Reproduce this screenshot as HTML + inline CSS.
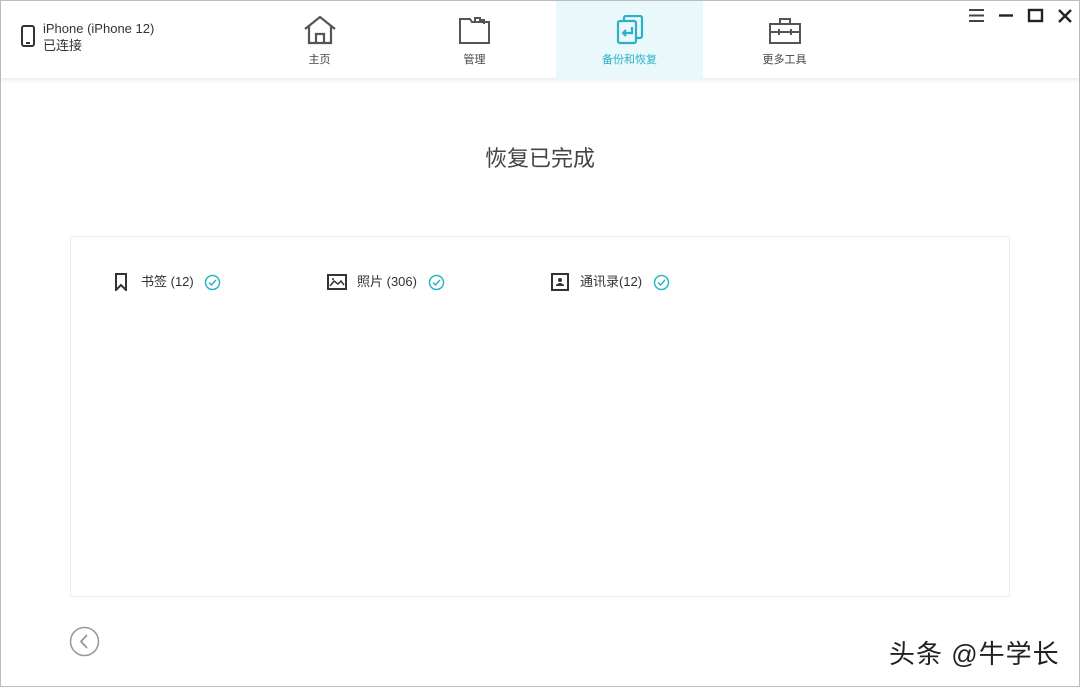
<!DOCTYPE html>
<html><head><meta charset="utf-8"><style>
*{margin:0;padding:0;box-sizing:border-box}
body{width:1080px;height:687px;background:#fff;font-family:"Liberation Sans","Noto Sans CJK SC",sans-serif;position:relative;overflow:hidden;color:#333}
.frame{position:absolute;inset:0;border:1px solid #bdbdbd}
.hdr{position:absolute;left:1px;top:1px;width:1078px;height:78px;background:#fff;box-shadow:0 2px 3px rgba(0,0,0,0.06);border-bottom:1px solid #eee}
.tab{position:absolute;top:0;width:147px;height:78px;text-align:center;font-size:11px;color:#444}
.tab svg{position:absolute;left:57px;top:14px}
.tab span{position:absolute;left:0;right:0;top:50px}
.abs{position:absolute}
</style></head><body>
<div class="frame"></div>
<div class="hdr">
 <svg class="abs" style="left:20px;top:24px" width="14" height="22" viewBox="0 0 14 22"><rect x="1" y="1" width="12" height="20" rx="2" fill="none" stroke="#333" stroke-width="2"/><rect x="5" y="17" width="4" height="2" fill="#333"/></svg>
 <div class="abs" style="left:42px;top:19px;font-size:13px;color:#333;line-height:17px">iPhone (iPhone 12)<br>已连接</div>
 <div class="tab" style="left:245px"><svg width="34" height="30" viewBox="0 0 34 30"><path d="M2 14 L17 2 L32 14 M6 11 V28 H28 V11 M13 28 V19 H21 V28" fill="none" stroke="#555" stroke-width="2.2"/></svg><span>主页</span></div>
 <div class="tab" style="left:400px"><svg width="34" height="30" viewBox="0 0 34 30"><path d="M2 4 H12 L14 7 H31 V28 H2 Z M17 7 V3 H22 V7 M22 7 V5 H26 V9" fill="none" stroke="#555" stroke-width="2"/></svg><span>管理</span></div>
 <div class="tab" style="left:555px;background:#e9f8fb;color:#2bb0c6"><svg width="34" height="30" viewBox="0 0 34 30"><rect x="11" y="1" width="18" height="22" rx="2" fill="none" stroke="#2bb0c6" stroke-width="2.2"/><rect x="5" y="6" width="18" height="22" rx="2" fill="#e9f8fb" stroke="#2bb0c6" stroke-width="2.2"/><path d="M19 12 V18 H10 M13 15 L10 18 L13 21" fill="none" stroke="#2bb0c6" stroke-width="2.2"/></svg><span>备份和恢复</span></div>
 <div class="tab" style="left:710px"><svg width="34" height="30" viewBox="0 0 34 30"><path d="M2 9 H32 V28 H2 Z M12 9 V4 H22 V9 M2 17 H32 M11 14 V20 M23 14 V20" fill="none" stroke="#555" stroke-width="2"/></svg><span>更多工具</span></div>
 <svg class="abs" style="left:966px;top:7px" width="110" height="16" viewBox="0 0 110 16"><path d="M2 2 H17 M2 7.5 H17 M2 13 H17" stroke="#444" stroke-width="2"/><path d="M32 7.5 H46" stroke="#222" stroke-width="2.4"/><rect x="62" y="2" width="13" height="11" fill="none" stroke="#222" stroke-width="2.4"/><path d="M92 2 L104 14 M104 2 L92 14" stroke="#222" stroke-width="2.4"/></svg>
</div>
<div class="abs" style="left:0;width:1080px;top:141px;text-align:center;font-size:22px;color:#444">恢复已完成</div>
<div class="abs" style="left:70px;top:236px;width:940px;height:361px;border:1px solid #ececec"></div>
<svg class="abs" style="left:114px;top:273px" width="14" height="18" viewBox="0 0 14 18"><path d="M2 1 H12 V17 L7 12 L2 17 Z" fill="none" stroke="#333" stroke-width="2"/></svg>
<div class="abs" style="left:141px;top:271px;font-size:13px;color:#333">书签 (12)</div>
<svg class="abs" style="left:204px;top:274px" width="17" height="17"><circle cx="8.5" cy="8.5" r="7" fill="none" stroke="#2bb7c4" stroke-width="1.5"/><path d="M5 8.5 L7.5 11 L12 6" fill="none" stroke="#2bb7c4" stroke-width="1.5"/></svg>
<svg class="abs" style="left:327px;top:274px" width="20" height="16" viewBox="0 0 20 16"><rect x="1" y="1" width="18" height="14" fill="none" stroke="#333" stroke-width="2"/><path d="M3 12 L7 7 L11 10 L14 7 L17 11" fill="none" stroke="#333" stroke-width="1.5"/><circle cx="6" cy="5" r="1" fill="#333"/></svg>
<div class="abs" style="left:357px;top:271px;font-size:13px;color:#333">照片 (306)</div>
<svg class="abs" style="left:428px;top:274px" width="17" height="17"><circle cx="8.5" cy="8.5" r="7" fill="none" stroke="#2bb7c4" stroke-width="1.5"/><path d="M5 8.5 L7.5 11 L12 6" fill="none" stroke="#2bb7c4" stroke-width="1.5"/></svg>
<svg class="abs" style="left:551px;top:273px" width="18" height="18" viewBox="0 0 18 18"><rect x="1" y="1" width="16" height="16" fill="none" stroke="#333" stroke-width="2"/><circle cx="9" cy="7" r="2" fill="#333"/><path d="M5 13 H13 V12 Q9 8 5 12 Z" fill="#333"/></svg>
<div class="abs" style="left:580px;top:271px;font-size:13px;color:#333">通讯录(12)</div>
<svg class="abs" style="left:653px;top:274px" width="17" height="17"><circle cx="8.5" cy="8.5" r="7" fill="none" stroke="#2bb7c4" stroke-width="1.5"/><path d="M5 8.5 L7.5 11 L12 6" fill="none" stroke="#2bb7c4" stroke-width="1.5"/></svg>
<svg class="abs" style="left:69px;top:626px" width="31" height="31"><circle cx="15.5" cy="15.5" r="14" fill="none" stroke="#999" stroke-width="1.6"/><path d="M18 9 L12 15.5 L18 22" fill="none" stroke="#999" stroke-width="1.8"/></svg>
<div class="abs" style="left:889px;top:634px;font-size:26px;color:#222;letter-spacing:1px">头条 @牛学长</div>
</body></html>
